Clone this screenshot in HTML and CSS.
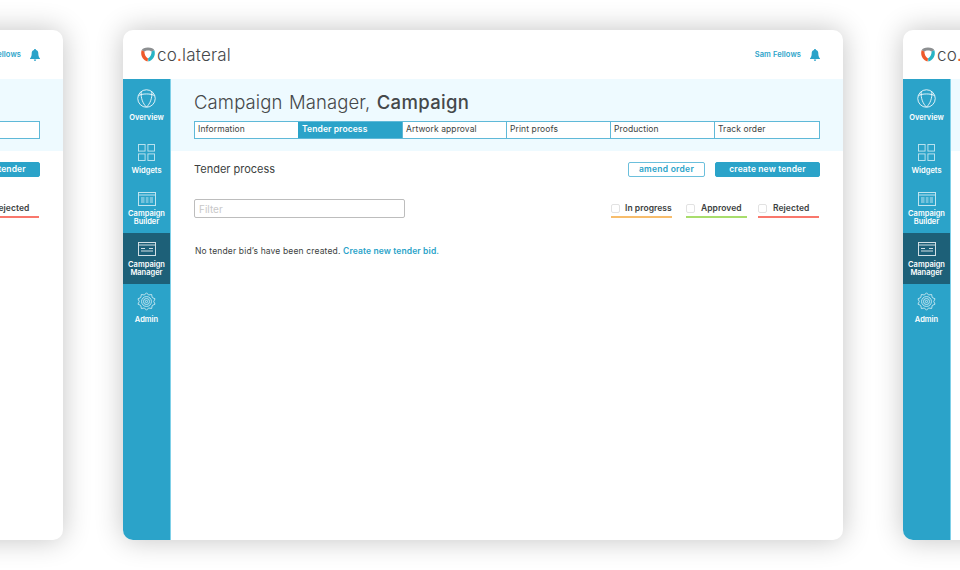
FILE: index.html
```html
<!DOCTYPE html>
<html lang="en">
<head>
  <meta charset="UTF-8" />
  <title>co.lateral Campaign Manager</title>
  <link rel="stylesheet" href="styles.css">
</head>
<body>
  <svg class="defs" width="0" height="0">
    <symbol id="i-logo" viewBox="0 0 14 15">
      <path d="M7 .4C3.6 .4 1.6 1.4 .6 3.2L3.4 4.6C4.2 3.8 5.4 3.4 7 3.4C8.6 3.4 9.8 3.8 10.6 4.6L13.4 3.2C12.4 1.4 10.4 .4 7 .4Z" fill="#8c8f91"/>
      <path d="M.6 3.2C-.8 8 1.4 13 6.6 14.6L7 11.6C4.8 10.4 3.4 7.6 3.4 4.6Z" fill="#ee5a2b"/>
      <path d="M13.4 3.2C14.8 8 12.6 13 7.4 14.6L7 11.6C9.2 10.4 10.6 7.6 10.6 4.6Z" fill="#27b3c4"/>
    </symbol>
    <symbol id="i-bell" viewBox="0 0 10 12">
      <path d="M5 0C5.6 0 6 .4 6 1C7.8 1.4 8.3 2.8 8.3 4.6C8.3 7 8.8 8.2 10 9.4V10H0V9.4C1.2 8.2 1.7 7 1.7 4.6C1.7 2.8 2.2 1.4 4 1C4 .4 4.4 0 5 0Z"/>
      <path d="M3.8 10.6H6.2C6.2 11.4 5.7 12 5 12C4.3 12 3.8 11.4 3.8 10.6Z"/>
    </symbol>
    <symbol id="i-overview" viewBox="0 0 20 20">
      <g fill="none" stroke="#fff" stroke-width=".9">
        <circle cx="10" cy="10" r="9.2"/>
        <path d="M1.6 7C5 4.6 15 4.6 18.4 7"/>
        <path d="M4.4 2.8C3.8 10 6.4 15.6 10 19C13.6 15.6 16.2 10 15.6 2.8"/>
      </g>
    </symbol>
    <symbol id="i-widgets" viewBox="0 0 18 18">
      <g fill="none" stroke="#fff" stroke-width="1" opacity=".7">
        <rect x=".5" y=".5" width="7" height="7"/>
        <rect x="10.5" y=".5" width="7" height="7"/>
        <rect x=".5" y="10.5" width="7" height="7"/>
        <rect x="10.5" y="10.5" width="7" height="7"/>
      </g>
    </symbol>
    <symbol id="i-builder" viewBox="0 0 18 14">
      <g fill="none" stroke="#fff" opacity=".7">
        <rect x=".5" y=".5" width="17" height="13"/>
        <path d="M.5 3H17.5"/>
        <path d="M3 6H6.5M7.8 6H10.5M11.8 6H15M3 8H6.5M7.8 8H10.5M11.8 8H15M3 10H6.5M7.8 10H10.5M11.8 10H15"/>
      </g>
    </symbol>
    <symbol id="i-manager" viewBox="0 0 18 14">
      <g fill="none" stroke="#fff" opacity=".8">
        <rect x=".5" y=".5" width="17" height="13"/>
        <path d="M.5 3H17.5"/>
        <path d="M3 6.5H7M3 9H15M11 6.5H15" stroke-width="1.2"/>
      </g>
    </symbol>
    <symbol id="i-admin" viewBox="0 0 20 20">
      <g fill="none" stroke="#fff" stroke-width=".9" opacity=".8">
        <path d="M10 .8L12.2 3.2L15.4 2.6L16 5.8L19 7.2L17.6 10L19 12.8L16 14.2L15.4 17.4L12.2 16.8L10 19.2L7.8 16.8L4.6 17.4L4 14.2L1 12.8L2.4 10L1 7.2L4 5.8L4.6 2.6L7.8 3.2Z"/>
        <circle cx="10" cy="10" r="5.2"/>
        <circle cx="10" cy="10" r="3.2"/>
        <circle cx="10" cy="10" r="1.2"/>
      </g>
    </symbol>
  </svg>

  <div class="desk">
    <section class="window">
      <header class="topbar">
        <div class="logo"><svg class="logo-mark"><use href="#i-logo"/></svg><span>co<b>.</b>lateral</span></div>
        <div class="user"><span>Sam Fellows</span><svg class="bell"><use href="#i-bell"/></svg></div>
      </header>
      <div class="body">
        <nav class="side">
          <a class="nav nav-overview"><svg class="ic-overview"><use href="#i-overview"/></svg><span>Overview</span></a>
          <a class="nav nav-widgets"><svg class="ic-widgets"><use href="#i-widgets"/></svg><span>Widgets</span></a>
          <a class="nav nav-builder"><svg class="ic-wide"><use href="#i-builder"/></svg><span>Campaign<br>Builder</span></a>
          <a class="nav nav-manager active"><svg class="ic-wide"><use href="#i-manager"/></svg><span>Campaign<br>Manager</span></a>
          <a class="nav nav-admin"><svg class="ic-overview"><use href="#i-admin"/></svg><span>Admin</span></a>
        </nav>
        <main class="main">
          <div class="hero">
            <h1>Campaign Manager, <strong>Campaign</strong></h1>
            <div class="tabs">
              <a>Information</a><a class="on">Tender process</a><a>Artwork approval</a><a>Print proofs</a><a>Production</a><a>Track order</a>
            </div>
          </div>
          <div class="content">
            <div class="row-head">
              <h2>Tender process</h2>
              <div class="btns"><button class="btn ghost">amend order</button><button class="btn solid">create new tender</button></div>
            </div>
            <div class="row-filter">
              <input class="filter" type="text" placeholder="Filter">
              <div class="legend">
                <label class="key amber"><i></i>In progress</label>
                <label class="key green"><i></i>Approved</label>
                <label class="key red"><i></i>Rejected</label>
              </div>
            </div>
            <p class="empty">No tender bid’s have been created. <a>Create new tender bid.</a></p>
          </div>
        </main>
      </div>
    </section>

    <section class="window">
      <header class="topbar">
        <div class="logo"><svg class="logo-mark"><use href="#i-logo"/></svg><span>co<b>.</b>lateral</span></div>
        <div class="user"><span>Sam Fellows</span><svg class="bell"><use href="#i-bell"/></svg></div>
      </header>
      <div class="body">
        <nav class="side">
          <a class="nav nav-overview"><svg class="ic-overview"><use href="#i-overview"/></svg><span>Overview</span></a>
          <a class="nav nav-widgets"><svg class="ic-widgets"><use href="#i-widgets"/></svg><span>Widgets</span></a>
          <a class="nav nav-builder"><svg class="ic-wide"><use href="#i-builder"/></svg><span>Campaign<br>Builder</span></a>
          <a class="nav nav-manager active"><svg class="ic-wide"><use href="#i-manager"/></svg><span>Campaign<br>Manager</span></a>
          <a class="nav nav-admin"><svg class="ic-overview"><use href="#i-admin"/></svg><span>Admin</span></a>
        </nav>
        <main class="main">
          <div class="hero">
            <h1>Campaign Manager, <strong>Campaign</strong></h1>
            <div class="tabs">
              <a>Information</a><a class="on">Tender process</a><a>Artwork approval</a><a>Print proofs</a><a>Production</a><a>Track order</a>
            </div>
          </div>
          <div class="content">
            <div class="row-head">
              <h2>Tender process</h2>
              <div class="btns"><button class="btn ghost">amend order</button><button class="btn solid">create new tender</button></div>
            </div>
            <div class="row-filter">
              <input class="filter" type="text" placeholder="Filter">
              <div class="legend">
                <label class="key amber"><i></i>In progress</label>
                <label class="key green"><i></i>Approved</label>
                <label class="key red"><i></i>Rejected</label>
              </div>
            </div>
            <p class="empty">No tender bid’s have been created. <a>Create new tender bid.</a></p>
          </div>
        </main>
      </div>
    </section>

    <section class="window">
      <header class="topbar">
        <div class="logo"><svg class="logo-mark"><use href="#i-logo"/></svg><span>co<b>.</b>lateral</span></div>
        <div class="user"><span>Sam Fellows</span><svg class="bell"><use href="#i-bell"/></svg></div>
      </header>
      <div class="body">
        <nav class="side">
          <a class="nav nav-overview"><svg class="ic-overview"><use href="#i-overview"/></svg><span>Overview</span></a>
          <a class="nav nav-widgets"><svg class="ic-widgets"><use href="#i-widgets"/></svg><span>Widgets</span></a>
          <a class="nav nav-builder"><svg class="ic-wide"><use href="#i-builder"/></svg><span>Campaign<br>Builder</span></a>
          <a class="nav nav-manager active"><svg class="ic-wide"><use href="#i-manager"/></svg><span>Campaign<br>Manager</span></a>
          <a class="nav nav-admin"><svg class="ic-overview"><use href="#i-admin"/></svg><span>Admin</span></a>
        </nav>
        <main class="main">
          <div class="hero">
            <h1>Campaign Manager, <strong>Campaign</strong></h1>
            <div class="tabs">
              <a>Information</a><a class="on">Tender process</a><a>Artwork approval</a><a>Print proofs</a><a>Production</a><a>Track order</a>
            </div>
          </div>
          <div class="content">
            <div class="row-head">
              <h2>Tender process</h2>
              <div class="btns"><button class="btn ghost">amend order</button><button class="btn solid">create new tender</button></div>
            </div>
            <div class="row-filter">
              <input class="filter" type="text" placeholder="Filter">
              <div class="legend">
                <label class="key amber"><i></i>In progress</label>
                <label class="key green"><i></i>Approved</label>
                <label class="key red"><i></i>Rejected</label>
              </div>
            </div>
            <p class="empty">No tender bid’s have been created. <a>Create new tender bid.</a></p>
          </div>
        </main>
      </div>
    </section>
  </div>
</body>
</html>
```

FILE: styles.css
```css
html, body { margin: 0; height: 100%; overflow: hidden; background: #fff; }
body { font-family: Inter, "Open Sans", sans-serif; color: #3c3f41; }
.defs { position: absolute; }

/* the three windows sit side by side, the outer two run off the screen */
.desk { display: flex; gap: 60px; margin-left: -657px; padding-top: 30px; width: 2280px; }
.window {
  width: 720px;
  height: 510px;
  flex: none;
  display: flex;
  flex-direction: column;
  background: #fff;
  border-radius: 10px;
  overflow: hidden;
  box-shadow: 0 0 28px rgba(0, 0, 0, .24);
}

/* top bar */
.topbar { height: 49px; flex: none; display: flex; align-items: center; justify-content: space-between; padding: 0 23px 0 18px; }
.logo { display: flex; align-items: center; gap: 2px; font-size: 17px; font-weight: 300; letter-spacing: .2px; color: #45484a; }
.logo b { font-weight: 400; color: #ee5a2b; }
.logo-mark { width: 14px; height: 15px; }
.user { display: flex; align-items: center; gap: 9px; font-size: 7.5px; font-weight: 600; letter-spacing: .1px; color: #2ba3c9; }
.bell { width: 10px; height: 12px; fill: #2ba3c9; }

.body { flex: 1; display: flex; min-height: 0; }

/* sidebar */
.side { width: 47px; flex: none; background: #2ba3c9; border-right: 1px solid #7fd0e8; }
.nav { display: flex; flex-direction: column; align-items: center; color: #fff; font-size: 7.5px; font-weight: 600; line-height: 8px; text-align: center; }
.nav span { display: block; }
.nav-overview { height: 48px; padding-top: 10px; box-sizing: border-box; gap: 6px; }
.nav-widgets { height: 53px; padding-top: 17px; box-sizing: border-box; gap: 6px; }
.nav-builder { height: 53px; padding-top: 12px; box-sizing: border-box; gap: 4px; }
.nav-manager { height: 51px; padding-top: 9px; box-sizing: border-box; gap: 5px; }
.nav-admin { padding-top: 8px; gap: 5px; }
.active { background: #1d6078; }
.ic-overview { width: 19px; height: 19px; }
.ic-widgets { width: 17px; height: 17px; }
.ic-wide { width: 18px; height: 14px; }

/* main */
.main { flex: 1; min-width: 0; }
.hero { height: 72px; box-sizing: border-box; background: #eefaff; padding: 11px 23px 0; }
.hero h1 { margin: 0; font-size: 18.5px; font-weight: 300; line-height: 24px; letter-spacing: .12px; word-spacing: 1px; color: #45484a; }
.hero h1 strong { font-weight: 500; letter-spacing: .35px; }
.tabs { display: grid; grid-template-columns: repeat(5, 104px) 1fr; margin-top: 7px; height: 18px; box-sizing: border-box; border: 1px solid #5fb9d8; border-left: 0; background: #fff; }
.tabs a { font-size: 8.5px; line-height: 15px; padding-left: 3px; border-left: 1px solid #5fb9d8; letter-spacing: .1px; color: #3c3f41; }
.tabs a.on { background: #2ba3c9; color: #fff; font-weight: 600; border-left-color: #2ba3c9; }

.content { padding: 11px 23px 0; }
.row-head { display: flex; align-items: center; justify-content: space-between; height: 15px; }
.row-head h2 { margin: 0 0 1px; font-size: 11px; font-weight: 400; color: #3c3f41; }
.btns { display: flex; gap: 10px; }
.btn { height: 15px; padding: 0; border-radius: 2px; border: 1px solid #2ba3c9; font: 600 8.5px Inter, sans-serif; line-height: 13px; color: #2ba3c9; background: #fff; }
.ghost { width: 77px; letter-spacing: .25px; border-color: #6bbfdc; }
.solid { width: 105px; letter-spacing: .12px; background: #2ba3c9; color: #fff; }

.row-filter { display: flex; justify-content: space-between; align-items: flex-start; margin-top: 22px; }
.filter { width: 211px; height: 19px; box-sizing: border-box; border: 1px solid #bdbdbd; border-radius: 2px; padding: 0 4px; font: 400 10px Inter, sans-serif; background: #fff; }
.filter::placeholder { color: #c8c8c8; }
.legend { display: flex; gap: 14px; margin-right: 1px; }
.key { display: flex; align-items: center; gap: 6px; width: 61px; height: 19px; padding-top: 1px; box-sizing: border-box; border-bottom: 2px solid; font-size: 8.5px; font-weight: 600; letter-spacing: .05px; color: #3c3f41; white-space: nowrap; }
.key:last-child { margin-left: -3px; }
.key i { width: 7px; height: 7px; border: 1px solid #e2e2e2; border-radius: 2px; flex: none; }
.amber { border-color: #f7bd6c; }
.green { border-color: #a8dd6c; }
.red { border-color: #f9776c; }
.key.amber { gap: 5px; }

.empty { margin: 26px 0 0 1px; font-size: 8.5px; line-height: 15px; letter-spacing: .15px; color: #3c3f41; }
.empty a { color: #2ba3c9; font-weight: 600; letter-spacing: .12px; }
```
